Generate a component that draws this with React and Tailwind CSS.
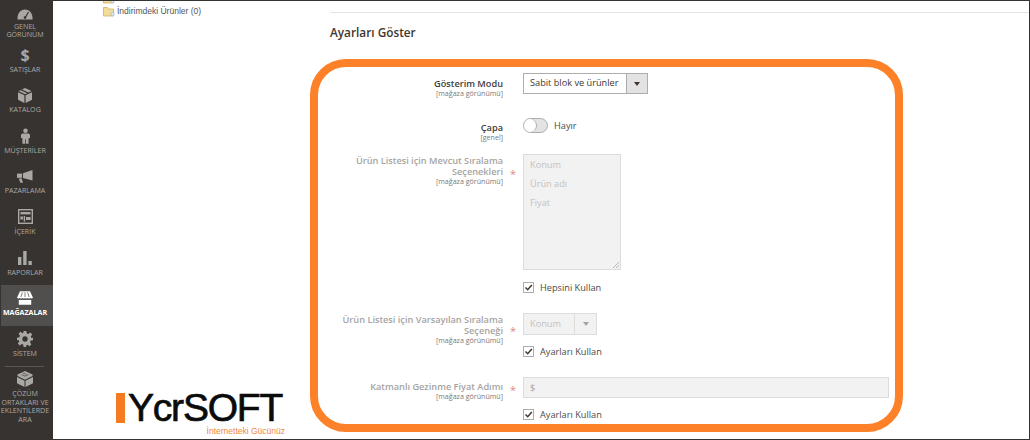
import React from 'react';

const sans = 'font-["Open_Sans",sans-serif]';

const icons = {
  gauge: (
    <svg viewBox="0 0 16 11" className="w-[16px] h-[11px]" fill="#aaa8a5">
      <path d="M0.5 10.5C0 4.5 3.5 0.5 8 0.5s8 4 7.5 10z" />
      <path d="M8 9L11.5 3" stroke="#373330" strokeWidth="1.2" />
      <circle cx="8" cy="8.6" r="1.3" fill="#373330" />
    </svg>
  ),
  box: (
    <svg viewBox="0 0 14 15" className="w-[14px] h-[15px]" fill="#aaa8a5">
      <path d="M7 0L13.5 3L10.5 4.6L4 1.5z" />
      <path d="M2.6 2.2L0.5 3L7 6.2L9.2 5.2z" />
      <path d="M0 4.2L6.4 7.3V15L0 11.8z" />
      <path d="M14 4.2L7.6 7.3V15L14 11.8z" />
    </svg>
  ),
  person: (
    <svg viewBox="0 0 10 17" className="w-[9px] h-[16px]" fill="#aaa8a5">
      <circle cx="5" cy="2.6" r="2.5" />
      <path d="M1.6 5.6h6.8L10 7v3.6L8.4 11v6H5.4v-5H4.6v5H1.6v-6L0 10.6V7z" />
    </svg>
  ),
  megaphone: (
    <svg viewBox="0 0 16 13" className="w-[16px] h-[13px]" fill="#aaa8a5">
      <path d="M15.5 0V10.5L6 8V3.2z" />
      <path d="M0 3.6H5V7.8H0z" />
      <path d="M1.8 8.4H4.6L6 12.8H3.4z" />
    </svg>
  ),
  layout: (
    <svg viewBox="0 0 15 15" className="w-[15px] h-[15px]" fill="none" stroke="#aaa8a5">
      <rect x="0.7" y="0.7" width="13.6" height="13.6" strokeWidth="1.4" />
      <path d="M2.5 4.2H12.5" strokeWidth="2.4" />
      <path d="M6.4 7V12.6" strokeWidth="1.4" />
      <path d="M2.4 9H5M8 9.5H12.6" strokeWidth="3" />
    </svg>
  ),
  bars: (
    <svg viewBox="0 0 14 14" className="w-[14px] h-[14px]" fill="#aaa8a5">
      <rect x="0" y="6" width="3.4" height="8" />
      <rect x="5.2" y="0" width="3.4" height="14" />
      <rect x="10.4" y="10" width="3.4" height="4" />
    </svg>
  ),
  store: (
    <svg viewBox="0 0 18 15" className="w-[16px] h-[14px]" fill="#ffffff">
      <path d="M3.4 0H14.6L18 7.2Q16.6 8.6 15 7.6Q13.4 8.8 12 7.6Q10.4 8.8 9 7.6Q7.6 8.8 6 7.6Q4.4 8.8 3 7.6Q1.4 8.6 0 7.2z" />
      <path d="M2 9.6Q3 9.8 3.8 9.4Q5 10 6 9.4Q7.5 10.2 9 9.4Q10.5 10.2 12 9.4Q13 10 14.2 9.4Q15 9.8 16 9.6V15H2z" />
      <path d="M6 1L4.4 6.4M9 1V6.4M12 1L13.6 6.4" stroke="#514f4d" strokeWidth="0.8" />
    </svg>
  ),
  gear: (
    <svg viewBox="0 0 24 24" className="w-[16px] h-[16px]" fill="#aaa8a5">
      <path fillRule="evenodd" d="M10 0h4l.7 3.6 2.2.9L20 2.4 22.8 5.2 20.7 8.200l.9 2.200L24 10v4l-3.600.7-.9 2.200 2.100 3.100-2.800 2.800-3.100-2.100-2.200.9L14 24h-4l-.7-3.600-2.200-.9-3.100 2.100L1.200 18.800l2.100-3.100-.9-2.200L0 14v-4l3.600-.7.9-2.200L2.400 4 5.200 1.200l3.100 2.100 1-.4zM12 8a4 4 0 1 0 0 8 4 4 0 0 0 0-8z" />
    </svg>
  ),
  brick: (
    <svg viewBox="0 0 16 16" className="w-[16px] h-[16px]" fill="#aaa8a5">
      <path d="M8 0L15.500 3.600V5L8 8.800L0.500 5V3.600z" />
      <path d="M0 6L7.500 9.800V16L0 12.200z" />
      <path d="M16 6L8.500 9.800V16L16 12.200z" />
      <path d="M4.500 3.600L8 5.200L11.500 3.600M6 2L9.500 3.600" stroke="#373330" strokeWidth="0.6" fill="none" />
    </svg>
  ),
};

const navItems = [
  { icon: icons.gauge, lines: ['GENEL', 'GÖRÜNÜM'], tight: true },
  { icon: <span className="text-[16px] leading-[16px] font-bold text-[#aaa8a5]">$</span>, lines: ['SATIŞLAR'] },
  { icon: icons.box, lines: ['KATALOG'] },
  { icon: icons.person, lines: ['MÜŞTERİLER'] },
  { icon: icons.megaphone, lines: ['PAZARLAMA'] },
  { icon: icons.layout, lines: ['İÇERİK'] },
  { icon: icons.bars, lines: ['RAPORLAR'] },
  { icon: icons.store, lines: ['MAĞAZALAR'], active: true },
  { icon: icons.gear, lines: ['SİSTEM'] },
];

const Sidebar = () => (
  <aside className="w-[52px] shrink-0 bg-[#373330] flex flex-col overflow-hidden">
    {navItems.map((item, i) => (
      <div
        key={i}
        className={`h-[40.600px] shrink-0 flex flex-col items-center pt-[4px] pr-[4px] ${item.active ? 'bg-[#514f4d]' : ''}`}
      >
        <div className="h-[18px] flex items-center justify-center">{item.icon}</div>
        <div className={`${item.tight ? '-mt-[1px]' : 'mt-[1px]'} text-center text-[7.100px] leading-[8px] ${item.active ? 'text-white font-bold' : 'text-[#aaa8a5]'}`}>
          {item.lines.map(l => <div key={l} className="whitespace-nowrap">{l}</div>)}
        </div>
      </div>
    ))}
    <div className="ml-[4px] mr-[9px] border-t border-[#5a5755]"></div>
    <div className="flex flex-col items-center pt-[4px] pr-[4px]">
      {icons.brick}
      <div className="mt-[2px] text-center text-[7.100px] leading-[8.500px] text-[#aaa8a5]">
        <div className="whitespace-nowrap">ÇÖZÜM</div>
        <div className="whitespace-nowrap">ORTAKLARI VE</div>
        <div className="whitespace-nowrap">EKLENTİLERDE</div>
        <div>ARA</div>
      </div>
    </div>
  </aside>
);

const Folder = () => (
  <svg viewBox="0 0 12 11" className="w-[12px] h-[11px] shrink-0">
    <path d="M0.500 1.500H4.500L5.500 3H10.500V10H0.500z" fill="#f3dc9a" stroke="#c9a95a" strokeWidth="0.7" />
    <circle cx="9.500" cy="8" r="1.800" fill="#dfe9f5" stroke="#8aa6c8" strokeWidth="0.5" />
  </svg>
);

const Logo = () => (
  <div className="ml-[63px] mb-[2px] w-[170px]">
    <div className="flex items-center h-[36px]">
      <div className="w-[9px] h-[30px] bg-[#f47b20] mr-[3px] shrink-0"></div>
      <span className="font-['Liberation_Sans',sans-serif] text-[39px] leading-[36px] text-[#0b0b0b] tracking-[-1.200px] whitespace-nowrap [-webkit-text-stroke:0.7px_#0b0b0b]">
        YcrSOFT
      </span>
    </div>
    <div className="pr-[1px] text-right font-['Liberation_Sans',sans-serif] text-[8.500px] leading-[11px] text-[#f0883e]">
      İnternetteki Gücünüz
    </div>
  </div>
);

const Check = ({ label }) => (
  <div className="flex items-center gap-[6px] h-[11px]">
    <div className="w-[11px] h-[11px] border border-[#adadad] bg-white flex items-center justify-center">
      <svg viewBox="0 0 9 9" className="w-[9px] h-[9px]" fill="none" stroke="#41362f" strokeWidth="1.500">
        <path d="M1.500 4.500L3.700 6.700L7.800 2" />
      </svg>
    </div>
    <span className="text-[9.200px] leading-[11px] text-[#4d4a48]">{label}</span>
  </div>
);

const Row = ({ label, scope, required, muted, className, labelClass, starClass, children }) => (
  <div className={`flex ${className}`}>
    <div className={`w-[173px] shrink-0 text-right ${labelClass}`}>
      <div className={`text-[9.200px] leading-[11px] font-semibold ${muted ? 'text-[#a6a4a2]' : 'text-[#3d3d3d]'}`}>{label}</div>
      <div className="text-[7.100px] leading-[8px] text-[#7a7a7a]">{scope}</div>
    </div>
    <div className={`w-[20px] shrink-0 text-center text-[11px] leading-[14px] text-[#d98a8a] ${starClass}`}>
      {required && '*'}
    </div>
    <div className="flex-1 min-w-0">{children}</div>
  </div>
);

export default function App() {
  return (
    <div className={`w-[1030px] h-[440px] relative overflow-hidden bg-white border border-[#333333] flex ${sans}`}>
      <Sidebar />

      <div className="w-[277px] shrink-0 flex flex-col justify-between overflow-hidden">
        <div className="ml-[50px] -mt-[8px] flex flex-col gap-[1px]">
          <Folder />
          <div className="flex items-center gap-[2px]">
            <Folder />
            <span className="font-['Liberation_Sans',sans-serif] text-[8.500px] leading-[12px] text-[#555555]">İndirimdeki Ürünler (0)</span>
          </div>
        </div>
        <Logo />
      </div>

      <main className="flex-1 min-w-0 pt-[11px]">
        <div className="border-t border-[#e3e3e3]"></div>
        <h2 className="mt-[11px] text-[11.800px] leading-[16px] font-semibold text-[#41362f]">Ayarları Göster</h2>

        <div className="pr-[140px] mt-[33px]">
          {/* Gösterim Modu */}
          <Row label="Gösterim Modu" scope="[mağaza görünümü]" className="h-[45px]" labelClass="pt-[5px]">
            <div className="w-[125px] h-[21px] flex border border-[#adadad] bg-white">
              <div className="flex-1 px-[6px] text-[9.200px] leading-[18px] text-[#41362f] whitespace-nowrap">Sabit blok ve ürünler</div>
              <div className="w-[21px] bg-[#e3e3e3] border-l border-[#adadad] flex items-center justify-center">
                <div className="border-x-[3px] border-x-transparent border-t-[4px] border-t-[#41362f]"></div>
              </div>
            </div>
          </Row>

          {/* Çapa */}
          <Row label="Çapa" scope="[genel]" className="h-[36px]" labelClass="pt-[4px]">
            <div className="flex items-center gap-[6px]">
              <div className="w-[25px] h-[15px] rounded-full border border-[#adadad] bg-[#e3e3e3]">
                <div className="w-[13px] h-[13px] rounded-full bg-white border-r border-[#adadad]"></div>
              </div>
              <span className="text-[9.200px] leading-[15px] text-[#4d4a48]">Hayır</span>
            </div>
          </Row>

          {/* Sıralama seçenekleri */}
          <Row
            label={<>Ürün Listesi için Mevcut Sıralama<br />Seçenekleri</>}
            scope="[mağaza görünümü]"
            muted
            required
            className="h-[159px]"
            labelClass="pt-[1px]"
            starClass="pt-[13px]"
          >
            <div className="relative w-[98px] h-[116px] border border-[#dcdcdc] bg-[#f2f2f2] px-[6px] text-[9.200px] leading-[19px] text-[#c4c2c0]">
              <div>Konum</div>
              <div>Ürün adı</div>
              <div>Fiyat</div>
              <svg viewBox="0 0 7 7" className="absolute right-[1px] bottom-[1px] w-[7px] h-[7px]" stroke="#8f8f8f" strokeWidth="0.600">
                <path d="M1 7L7 1M4 7L7 4" />
              </svg>
            </div>
            <div className="mt-[12px]"><Check label="Hepsini Kullan" /></div>
          </Row>

          {/* Varsayılan sıralama */}
          <Row
            label={<>Ürün Listesi için Varsayılan Sıralama<br />Seçeneği</>}
            scope="[mağaza görünümü]"
            muted
            required
            className="h-[64px]"
            labelClass="pt-[1px]"
            starClass="pt-[11px]"
          >
            <div className="w-[74px] h-[22px] flex border border-[#dcdcdc] bg-[#f2f2f2]">
              <div className="flex-1 px-[6px] text-[9.200px] leading-[20px] text-[#c4c2c0]">Konum</div>
              <div className="w-[22px] border-l border-[#dcdcdc] flex items-center justify-center">
                <div className="border-x-[3px] border-x-transparent border-t-[4px] border-t-[#a6a4a2]"></div>
              </div>
            </div>
            <div className="mt-[11px]"><Check label="Ayarları Kullan" /></div>
          </Row>

          {/* Fiyat adımı */}
          <Row label="Katmanlı Gezinme Fiyat Adımı" scope="[mağaza görünümü]" muted required className="h-[44px]" labelClass="pt-[4px]" starClass="pt-[6px]">
            <div className="h-[21px] border border-[#dcdcdc] bg-[#f2f2f2] px-[6px] text-[9.200px] leading-[19px] text-[#a6a4a2]">$</div>
            <div className="mt-[11px]"><Check label="Ayarları Kullan" /></div>
          </Row>
        </div>
      </main>

      {/* orange highlight drawn over the form */}
      <div className="absolute left-[309px] top-[58px] w-[593px] h-[373px] rounded-[36px] border-[8px] border-[#fd8128] pointer-events-none"></div>
    </div>
  );
}
